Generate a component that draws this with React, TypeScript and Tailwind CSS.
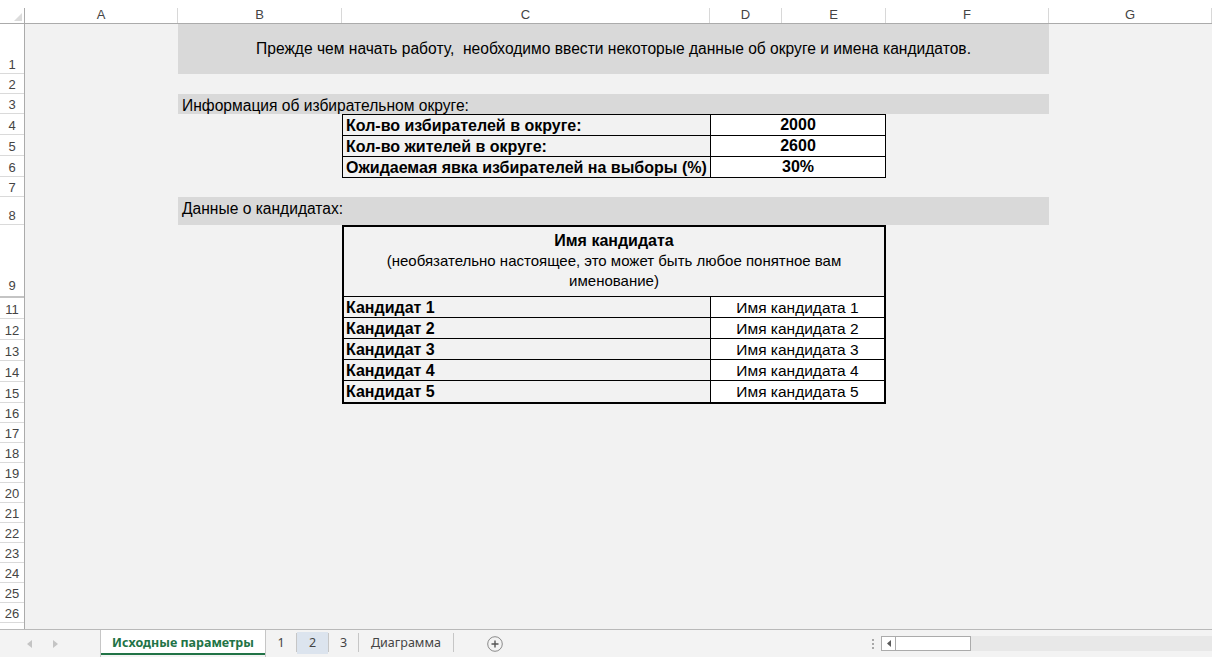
import React from "react";

const cols = [
  { label: "A", w: "w-[153px]" },
  { label: "B", w: "w-[164px]" },
  { label: "C", w: "w-[368px]" },
  { label: "D", w: "w-[72px]" },
  { label: "E", w: "w-[104px]" },
  { label: "F", w: "w-[163px]" },
  { label: "G", w: "w-[163px]" },
];

const rowHeads = [
  { label: "1", h: "h-[50px]" },
  { label: "2", h: "h-[20px]" },
  { label: "3", h: "h-[20px]" },
  { label: "4", h: "h-[21px]" },
  { label: "5", h: "h-[21px]" },
  { label: "6", h: "h-[21px]" },
  { label: "7", h: "h-[20px]" },
  { label: "8", h: "h-[28px]" },
  { label: "9", h: "h-[73px]", thick: true },
  { label: "11", h: "h-[21px]" },
  { label: "12", h: "h-[21px]" },
  { label: "13", h: "h-[21px]" },
  { label: "14", h: "h-[21px]" },
  { label: "15", h: "h-[21px]" },
  { label: "16", h: "h-[20px]" },
  { label: "17", h: "h-[20px]" },
  { label: "18", h: "h-[20px]" },
  { label: "19", h: "h-[20px]" },
  { label: "20", h: "h-[20px]" },
  { label: "21", h: "h-[20px]" },
  { label: "22", h: "h-[20px]" },
  { label: "23", h: "h-[20px]" },
  { label: "24", h: "h-[20px]" },
  { label: "25", h: "h-[20px]" },
  { label: "26", h: "h-[20px]" },
];

const info = [
  { k: "Кол-во избирателей в округе:", v: "2000" },
  { k: "Кол-во жителей в округе:", v: "2600" },
  { k: "Ожидаемая явка избирателей на выборы (%)", v: "30%" },
];

const candidates = [1, 2, 3, 4, 5];

export default function App() {
  return (
    <div className="w-[1212px] h-[657px] overflow-hidden flex flex-col bg-white font-['Liberation_Sans',Arial,sans-serif] text-black">
      {/* Column header */}
      <div className="flex h-[24px] shrink-0 bg-white border-b border-[#ababab]">
        <div className="w-[25px] shrink-0 pt-[8px]">
          <div className="h-full border-r border-[#ababab] flex items-end justify-end pr-[2px] pb-[2px]">
            <svg width="8" height="8" viewBox="0 0 8 8">
              <polygon points="8,0 8,8 0,8" fill="#dcdcdc" />
            </svg>
          </div>
        </div>
        {cols.map((c) => (
          <div key={c.label} className={`${c.w} shrink-0 pt-[8px]`}>
            <div className="h-full border-r border-[#d8d8d8] flex items-end justify-center pb-[2px] text-[13px] leading-none text-[#444]">
              {c.label}
            </div>
          </div>
        ))}
      </div>

      {/* Sheet area */}
      <div className="flex h-[605px] shrink-0 overflow-hidden">
        <div className="w-[25px] shrink-0 flex flex-col bg-white border-r border-[#ababab]">
          {rowHeads.map((r) => (
            <div
              key={r.label}
              className={`${r.h} shrink-0 flex items-end justify-center text-[13px] leading-none text-[#444] ${
                r.thick ? "border-b-2 border-[#c4c4c4] pb-[4px]" : "border-b border-[#dadada] pb-[2px]"
              }`}
            >
              {r.label}
            </div>
          ))}
          <div className="h-[6px] shrink-0" />
        </div>

        <div className="flex-1 bg-[#f2f2f2] grid grid-cols-[153px_164px_368px_72px_104px_163px_163px] grid-rows-[50px_20px_20px_21px_21px_21px_20px_28px_73px_21px_21px_21px_21px_21px_20px_20px_20px_20px_20px_20px_20px_20px_20px_20px_20px_6px]">
          {/* Row 1 band */}
          <div className="col-[2/7] row-[1/2] bg-[#d9d9d9] flex items-center justify-center text-[15.6px] leading-[20px] whitespace-pre">
            {"Прежде чем начать работу,  необходимо ввести некоторые данные об округе и имена кандидатов."}
          </div>

          {/* Row 3 band */}
          <div className="col-[2/7] row-[3/4] bg-[#d9d9d9] flex items-end pl-[4px] text-[15.6px] leading-[16px] whitespace-nowrap">
            Информация об избирательном округе:
          </div>

          {/* Info table */}
          <div className="col-[3/6] row-[4/7] self-start grid grid-cols-[368px_175px] border-l border-t border-black">
            {info.map((r) => (
              <React.Fragment key={r.k}>
                <div className="h-[21px] border-r border-b border-black bg-[#f2f2f2] pl-[3px] pt-[1px] text-[16px] leading-[19px] font-bold whitespace-nowrap">
                  {r.k}
                </div>
                <div className="h-[21px] border-r border-b border-black bg-white text-center text-[16px] leading-[19px] font-bold">
                  {r.v}
                </div>
              </React.Fragment>
            ))}
          </div>

          {/* Row 8 band */}
          <div className="col-[2/7] row-[8/9] bg-[#d9d9d9] flex items-center pl-[4px] pb-[5px] text-[15.6px] leading-[20px] whitespace-nowrap">
            Данные о кандидатах:
          </div>

          {/* Candidates table */}
          <div className="col-[3/6] row-[9/15] self-start border-2 border-black flex flex-col">
            <div className="h-[70px] border-b border-black bg-[#f2f2f2] pt-[4px] text-center text-[15px] leading-[20px] whitespace-nowrap">
              <div className="font-bold text-[16px]">Имя кандидата</div>
              <div>(необязательно настоящее, это может быть любое понятное вам</div>
              <div>именование)</div>
            </div>
            {candidates.map((n) => (
              <div
                key={n}
                className={`h-[21px] flex ${n < 5 ? "border-b border-black" : ""}`}
              >
                <div className="w-[367px] shrink-0 border-r border-black bg-[#f2f2f2] pl-[2px] pt-[1px] text-[16px] leading-[19px] font-bold whitespace-nowrap">
                  Кандидат {n}
                </div>
                <div className="flex-1 bg-white pt-[1px] text-center text-[15.5px] leading-[19px] whitespace-nowrap">
                  Имя кандидата {n}
                </div>
              </div>
            ))}
          </div>
        </div>
      </div>

      {/* Tab bar */}
      <div className="h-[28px] shrink-0 flex border-t border-[#b9b9b9] bg-[#f3f3f3] font-['Noto_Sans',sans-serif] text-[12.5px] text-[#444]">
        <div className="w-[100px] shrink-0 flex items-center gap-[21px] pl-[27px]">
          <svg width="5" height="8" viewBox="0 0 5 8">
            <polygon points="5,0 5,8 0,4" fill="#c4c4c4" />
          </svg>
          <svg width="5" height="8" viewBox="0 0 5 8">
            <polygon points="0,0 0,8 5,4" fill="#c4c4c4" />
          </svg>
        </div>
        <div className="w-[166px] shrink-0 flex flex-col border-l border-r border-[#c6c6c6]">
          <div className="h-[23px] bg-white flex items-center justify-center pt-[3px] font-bold text-[#217346] leading-none">
            Исходные параметры
          </div>
          <div className="h-[2px] bg-[#217346]" />
        </div>
        <div className="w-[30px] shrink-0 flex items-center justify-center">1</div>
        <div className="w-[1px] h-[19px] mt-[3px] bg-[#c6c6c6]" />
        <div className="w-[31px] shrink-0 h-[22px] mt-[2px] bg-[#dce4ee] flex items-center justify-center pt-[1px]">2</div>
        <div className="w-[1px] h-[19px] mt-[3px] bg-[#c6c6c6]" />
        <div className="w-[29px] shrink-0 flex items-center justify-center">3</div>
        <div className="w-[1px] h-[19px] mt-[3px] bg-[#c6c6c6]" />
        <div className="w-[94px] shrink-0 flex items-center justify-center">Диаграмма</div>
        <div className="w-[1px] h-[19px] mt-[3px] bg-[#c6c6c6]" />
        <div className="w-[33px] shrink-0" />
        <div className="flex items-center">
          <svg width="16" height="16" viewBox="0 0 16 16">
            <circle cx="8" cy="8" r="7.3" fill="none" stroke="#8a8a8a" strokeWidth="1" />
            <path d="M8 4.5v7M4.5 8h7" stroke="#555" strokeWidth="1.4" />
          </svg>
        </div>
        <div className="flex-1" />
        <div className="w-[16px] shrink-0 flex flex-col items-center justify-center gap-[2px]">
          <div className="w-[2px] h-[2px] bg-[#a8a8a8]" />
          <div className="w-[2px] h-[2px] bg-[#a8a8a8]" />
          <div className="w-[2px] h-[2px] bg-[#a8a8a8]" />
        </div>
        <div className="w-[331px] shrink-0 flex pt-[6px] pb-[6px]">
          <div className="w-[15px] h-[15px] shrink-0 bg-white border border-[#ababab] flex items-center justify-center">
            <svg width="4" height="7" viewBox="0 0 4 7">
              <polygon points="4,0 4,7 0,3.5" fill="#5a5a5a" />
            </svg>
          </div>
          <div className="w-[75px] h-[15px] shrink-0 bg-white border border-l-0 border-[#ababab]" />
          <div className="flex-1 h-[15px] bg-[#e8e8e8]" />
        </div>
      </div>
    </div>
  );
}
